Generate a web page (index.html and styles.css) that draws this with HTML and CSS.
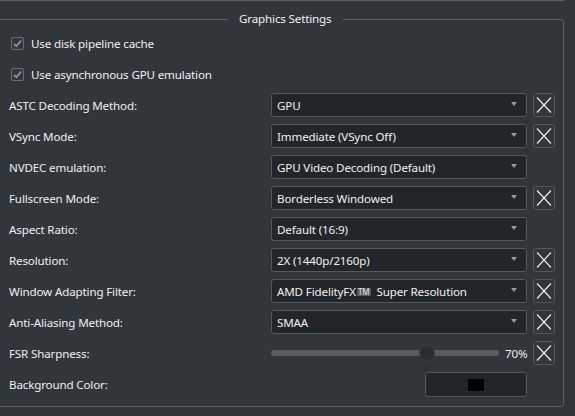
FILE: index.html
```html
<!DOCTYPE html>
<html>
<head>
<meta charset="utf-8">
<link rel="stylesheet" href="styles.css">
</head>
<body>
<div class="prev-group"></div>
<div class="group">
  <div class="group-title">Graphics Settings</div>
  <div class="grid">
    <label class="check-row"><span class="checkbox"><svg width="13" height="13" viewBox="0 0 13 13"><path d="M3 6.8 L5.4 9.2 L10.2 3.6" fill="none" stroke="#8d9094" stroke-width="1.8"/></svg></span>Use disk pipeline cache</label>
    <label class="check-row"><span class="checkbox"><svg width="13" height="13" viewBox="0 0 13 13"><path d="M3 6.8 L5.4 9.2 L10.2 3.6" fill="none" stroke="#8d9094" stroke-width="1.8"/></svg></span>Use asynchronous GPU emulation</label>

    <div class="label">ASTC Decoding Method:</div>
    <div class="combo"><span>GPU</span><i class="arrow"></i></div>
    <div class="reset"><svg width="22" height="24" viewBox="0 0 22 24"><path d="M4 4.5 L18 19.5 M18 4.5 L4 19.5" stroke="#f0f1f2" stroke-width="1.1"/></svg></div>

    <div class="label">VSync Mode:</div>
    <div class="combo"><span>Immediate (VSync Off)</span><i class="arrow"></i></div>
    <div class="reset"><svg width="22" height="24" viewBox="0 0 22 24"><path d="M4 4.5 L18 19.5 M18 4.5 L4 19.5" stroke="#f0f1f2" stroke-width="1.1"/></svg></div>

    <div class="label">NVDEC emulation:</div>
    <div class="combo"><span>GPU Video Decoding (Default)</span><i class="arrow"></i></div>
    <div></div>

    <div class="label">Fullscreen Mode:</div>
    <div class="combo"><span>Borderless Windowed</span><i class="arrow"></i></div>
    <div class="reset"><svg width="22" height="24" viewBox="0 0 22 24"><path d="M4 4.5 L18 19.5 M18 4.5 L4 19.5" stroke="#f0f1f2" stroke-width="1.1"/></svg></div>

    <div class="label">Aspect Ratio:</div>
    <div class="combo"><span>Default (16:9)</span><i class="arrow"></i></div>
    <div></div>

    <div class="label">Resolution:</div>
    <div class="combo"><span>2X (1440p/2160p)</span><i class="arrow"></i></div>
    <div class="reset"><svg width="22" height="24" viewBox="0 0 22 24"><path d="M4 4.5 L18 19.5 M18 4.5 L4 19.5" stroke="#f0f1f2" stroke-width="1.1"/></svg></div>

    <div class="label">Window Adapting Filter:</div>
    <div class="combo"><span>AMD FidelityFX<span class="tm">TM</span> Super Resolution</span><i class="arrow"></i></div>
    <div class="reset"><svg width="22" height="24" viewBox="0 0 22 24"><path d="M4 4.5 L18 19.5 M18 4.5 L4 19.5" stroke="#f0f1f2" stroke-width="1.1"/></svg></div>

    <div class="label">Anti-Aliasing Method:</div>
    <div class="combo"><span>SMAA</span><i class="arrow"></i></div>
    <div class="reset"><svg width="22" height="24" viewBox="0 0 22 24"><path d="M4 4.5 L18 19.5 M18 4.5 L4 19.5" stroke="#f0f1f2" stroke-width="1.1"/></svg></div>

    <div class="label">FSR Sharpness:</div>
    <div class="slider-row">
      <div class="slider"><div class="groove"></div><div class="thumb" style="--v: 0.7"></div></div>
      <span class="value">70%</span>
    </div>
    <div class="reset"><svg width="22" height="24" viewBox="0 0 22 24"><path d="M4 4.5 L18 19.5 M18 4.5 L4 19.5" stroke="#f0f1f2" stroke-width="1.1"/></svg></div>

    <div class="label">Background Color:</div>
    <div class="color-cell"><div class="color-btn"><span class="swatch"></span></div></div>
    <div></div>
  </div>
</div>
</body>
</html>
```
FILE: styles.css
```css
html, body {
  margin: 0;
  padding: 0;
  background: #31363b;
}
body {
  width: 575px;
  height: 416px;
  overflow: hidden;
  font-family: "Noto Sans", "Open Sans", sans-serif;
  font-size: 11.6px;
  letter-spacing: -0.15px;
  color: #eff0f1;
}
.prev-group {
  width: 564px;
  height: 0;
  border-top: 1px solid #5d6166;
}
.group {
  position: relative;
  margin-top: 18px;
  margin-left: -1px;
  width: 565px;
  height: 388px;
  border: 1px solid #5d6166;
  border-radius: 0 3px 3px 0;
  box-sizing: border-box;
  padding: 11px 0 0 9px;
}
.group-title {
  position: absolute;
  top: -10px;
  left: 228px;
  padding: 0 11px;
  background: #31363b;
  line-height: 18px;
}
.grid {
  display: grid;
  grid-template-columns: 256px 256px 22px;
  grid-auto-rows: 24px;
  column-gap: 6px;
  row-gap: 7px;
}
.check-row {
  grid-column: 1 / -1;
  display: flex;
  align-items: center;
  gap: 7px;
  padding-left: 2px;
}
.checkbox {
  width: 13px;
  height: 13px;
  box-sizing: border-box;
  border: 1px solid #6a6e73;
  border-radius: 2px;
  display: flex;
  position: relative;
}
.checkbox svg {
  position: absolute;
  left: -1px;
  top: -1px;
}
.label {
  display: flex;
  align-items: center;
}
.combo {
  display: flex;
  align-items: center;
  justify-content: space-between;
  background: #232629;
  border: 1px solid #54595e;
  border-radius: 3px;
  box-sizing: border-box;
  padding: 0 9px 0 5px;
}
.arrow {
  width: 0;
  height: 0;
  border-left: 3.5px solid transparent;
  border-right: 3.5px solid transparent;
  border-top: 4px solid #9a9da1;
  margin-top: -2px;
}
.tm {
  display: inline-block;
  font-size: 8px;
  line-height: 8px;
  letter-spacing: 0;
  padding: 0 1px;
  margin: 0 3px 0 1px;
  background: #55595d;
  color: #e8e9ea;
  vertical-align: 1px;
}
.reset {
  border: 1px solid #54595e;
  border-radius: 3px;
  box-sizing: border-box;
  position: relative;
}
.reset svg {
  position: absolute;
  left: -1px;
  top: -1px;
}
.slider-row {
  display: flex;
  align-items: center;
  gap: 6px;
}
.slider {
  position: relative;
  flex: 1;
  height: 24px;
}
.groove {
  position: absolute;
  left: 0;
  right: 0;
  top: 9px;
  height: 6px;
  border-radius: 3px;
  background: #595d62;
}
.thumb {
  position: absolute;
  top: 4px;
  left: calc(8px + var(--v) * (100% - 16px));
  width: 16px;
  height: 16px;
  margin-left: -8px;
  border-radius: 50%;
  background: #2a2e32;
  border: 1px solid #3a3e42;
  box-sizing: border-box;
}
.value {
  width: 22px;
  text-align: right;
}
.color-cell {
  display: flex;
  justify-content: flex-end;
}
.color-btn {
  width: 102px;
  height: 25px;
  box-sizing: border-box;
  background: #232629;
  border: 1px solid #54595e;
  border-radius: 3px;
  display: flex;
  align-items: center;
  justify-content: center;
}
.swatch {
  width: 16px;
  height: 12px;
  background: #000;
}
```
